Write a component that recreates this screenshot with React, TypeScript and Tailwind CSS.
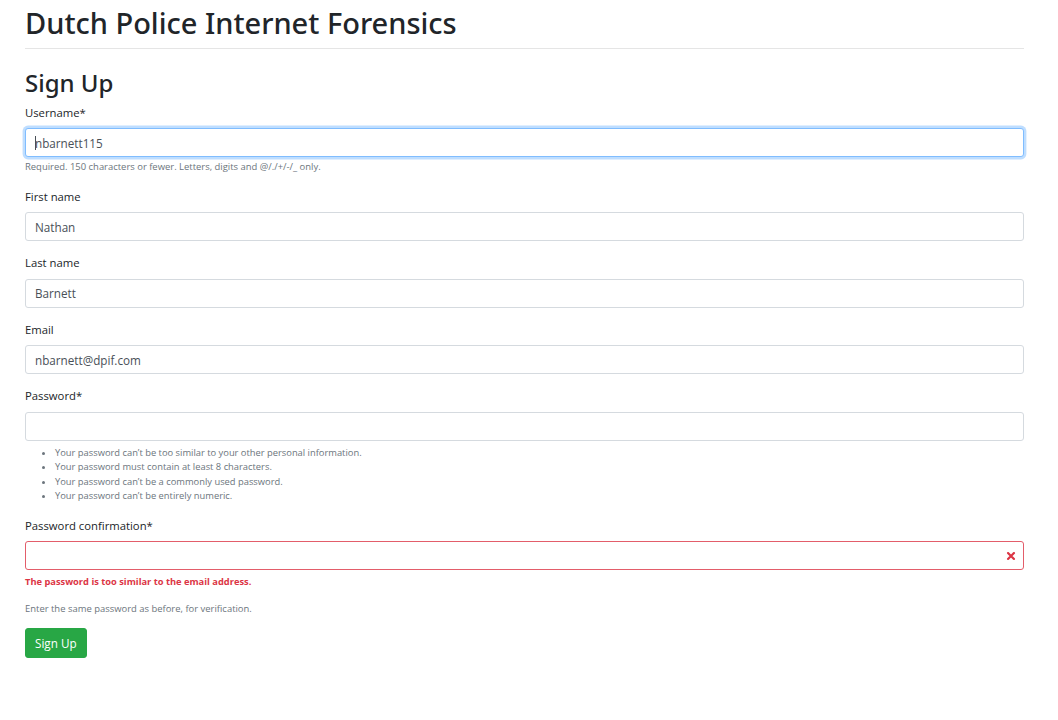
import React from "react";

const fieldBase =
  "block h-[29px] w-full rounded-[3px] border bg-white px-[9px] text-[11.7px] text-[#495057] outline-none";

function Label({ children }: { children: React.ReactNode }) {
  return (
    <label className="mb-[6.5px] block text-[11.3px] leading-[19px] text-[#212529]">
      {children}
    </label>
  );
}

function TextField({ label, value }: { label: string; value: string }) {
  return (
    <div className="mb-[12px]">
      <Label>{label}</Label>
      <input
        readOnly
        defaultValue={value}
        className={`${fieldBase} border-[#d5dadf]`}
      />
    </div>
  );
}

const passwordRules = [
  "Your password can\u2019t be too similar to your other personal information.",
  "Your password must contain at least 8 characters.",
  "Your password can\u2019t be a commonly used password.",
  "Your password can\u2019t be entirely numeric.",
];

function InvalidIcon() {
  return (
    <svg
      viewBox="-2 -2 7 7"
      width="14"
      height="14"
      fill="#dc3545"
      className="absolute right-[6.5px] top-1/2 -translate-y-1/2"
    >
      <path stroke="#dc3545" strokeWidth="1.1" d="M0 0l3 3m0-3L0 3" />
      <circle r=".55" />
      <circle cx="3" r=".55" />
      <circle cy="3" r=".55" />
      <circle cx="3" cy="3" r=".55" />
    </svg>
  );
}

export default function App() {
  return (
    <div className="min-h-[720px] bg-white font-['Open_Sans',sans-serif]">
      <div className="ml-[25px] w-[999px] pt-[5px]">
        <h1 className="font-['Noto_Sans',sans-serif] text-[29px] font-medium leading-[36px] text-[#212529]">
          Dutch Police Internet Forensics
        </h1>
        <hr className="mt-[7px] border-t border-[#e5e5e5]" />

        <h2 className="mt-[18.5px] mb-[6px] font-['Noto_Sans',sans-serif] text-[24px] font-medium leading-[29px] text-[#212529]">
          Sign Up
        </h2>

        <form>
          <div className="mb-[12.5px]">
            <Label>Username*</Label>
            <div className="relative">
              <input
                readOnly
                defaultValue="nbarnett115"
                className={`${fieldBase} border-[#80bdff] shadow-[0_0_0_2.4px_rgba(0,123,255,0.25)]`}
              />
              <span className="absolute left-[9.5px] top-[7.5px] h-[14px] w-px bg-[#495057]" />
            </div>
            <small className="mt-[3px] block text-[9.45px] leading-[14.4px] text-[#6c757d]">
              Required. 150 characters or fewer. Letters, digits and @/./+/-/_ only.
            </small>
          </div>

          <TextField label="First name" value="Nathan" />
          <TextField label="Last name" value="Barnett" />
          <TextField label="Email" value="nbarnett@dpif.com" />

          <div className="mb-[12px]">
            <Label>Password*</Label>
            <input
              readOnly
              type="password"
              className={`${fieldBase} border-[#d5dadf]`}
            />
            <ul className="mt-[5px] list-disc pl-[30px] text-[9.35px] leading-[14.4px] text-[#6c757d]">
              {passwordRules.map((rule) => (
                <li key={rule}>{rule}</li>
              ))}
            </ul>
          </div>

          <div className="mb-[12px]">
            <Label>Password confirmation*</Label>
            <div className="relative">
              <input
                readOnly
                type="password"
                className={`${fieldBase} border-[#e35d6a] pr-[27px]`}
              />
              <InvalidIcon />
            </div>
            <p className="mt-[4.5px] text-[9.3px] font-bold leading-[14.4px] text-[#dc3545]">
              The password is too similar to the email address.
            </p>
            <small className="mt-[13px] block text-[9.45px] leading-[14.4px] text-[#6c757d]">
              Enter the same password as before, for verification.
            </small>
          </div>

          <button
            type="button"
            className="h-[29.5px] rounded-[3px] border border-[#28a745] bg-[#28a745] px-[9px] text-[11.7px] leading-[18px] text-white"
          >
            Sign Up
          </button>
        </form>
      </div>
    </div>
  );
}
